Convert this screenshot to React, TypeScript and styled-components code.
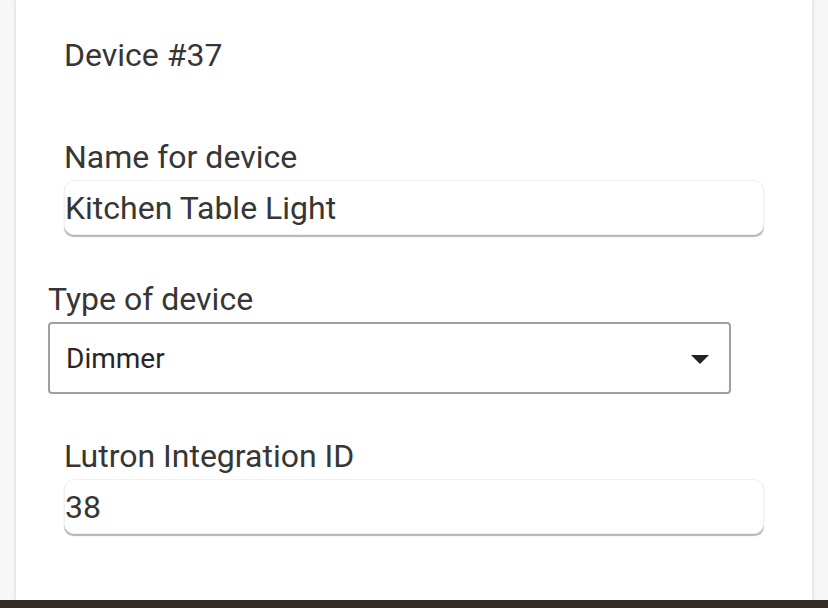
import React from 'react';
import styled, { createGlobalStyle } from 'styled-components';

const GlobalStyle = createGlobalStyle`
  html, body {
    margin: 0;
    padding: 0;
    height: 100%;
    background: #f7f7f7;
    overflow: hidden;
  }
  body {
    font-family: Roboto, "Noto Sans", sans-serif;
    color: #363636;
  }
`;

const Page = styled.div`
  height: 608px;
  display: flex;
  flex-direction: column;
`;

const Card = styled.div`
  flex: 1;
  margin: 0 16px;
  background: #fff;
  box-shadow: 0 0 4px rgba(0, 0, 0, 0.18);
  display: flex;
  flex-direction: column;
`;

const BottomBar = styled.div`
  height: 8px;
  background: #352b27;
`;

const Title = styled.div`
  padding: 37px 48px 0;
  font-size: 32px;
  line-height: 36px;
`;

const Field = styled.div<{ $indent: number; $top: number }>`
  padding: ${(p) => p.$top}px ${(p) => p.$indent}px 0;
  display: flex;
  flex-direction: column;
`;

const Label = styled.label`
  font-size: 32px;
  line-height: 36px;
`;

const TextInput = styled.div`
  margin-top: 5px;
  height: 55px;
  box-sizing: border-box;
  border-radius: 10px;
  border: 1px solid #f0f0f0;
  box-shadow: 0 2px 1px -0.5px #b5b5b5;
  display: flex;
  align-items: center;
  font-size: 32px;
  background: #fff;
`;

const Select = styled.div`
  margin-top: 5px;
  width: 683px;
  height: 72px;
  box-sizing: border-box;
  border: 2px solid #a0a0a0;
  border-radius: 4px;
  display: flex;
  align-items: center;
  justify-content: space-between;
  padding: 0 20px 0 16px;
  font-size: 28px;
  color: #262626;
`;

const Caret = styled.span`
  width: 0;
  height: 0;
  border-left: 9px solid transparent;
  border-right: 9px solid transparent;
  border-top: 9px solid #222;
  margin-top: 2px;
`;

export default function App() {
  return (
    <Page>
      <GlobalStyle />
      <Card>
        <Title>Device #37</Title>
        <Field $indent={48} $top={66}>
          <Label>Name for device</Label>
          <TextInput>Kitchen Table Light</TextInput>
        </Field>
        <Field $indent={32} $top={46}>
          <Label>Type of device</Label>
          <Select>
            <span>Dimmer</span>
            <Caret />
          </Select>
        </Field>
        <Field $indent={48} $top={44}>
          <Label>Lutron Integration ID</Label>
          <TextInput>38</TextInput>
        </Field>
      </Card>
      <BottomBar />
    </Page>
  );
}
